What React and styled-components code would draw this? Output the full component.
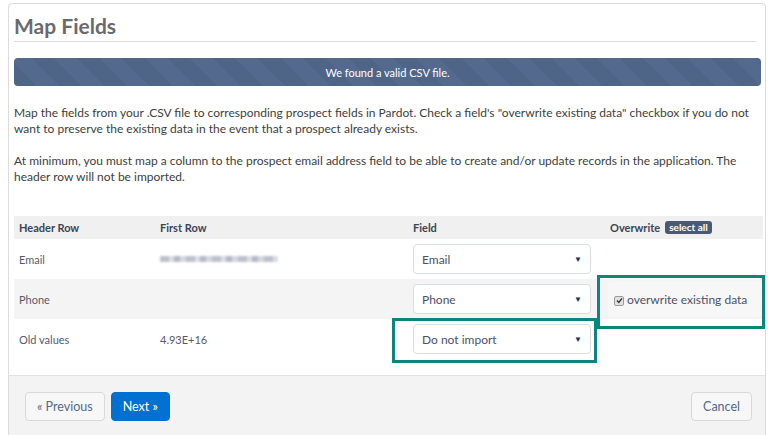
import styled, { createGlobalStyle } from 'styled-components';

const GlobalStyle = createGlobalStyle`
  html, body {
    height: 100%;
  }
  body {
    margin: 0;
    background: #ffffff;
    font-family: Lato, "Open Sans", "Liberation Sans", sans-serif;
    overflow: hidden;
  }
`;

const rows = [
  { header: 'Email', first: null, field: 'Email', overwrite: false, shade: false },
  { header: 'Phone', first: '', field: 'Phone', overwrite: true, shade: true },
  { header: 'Old values', first: '4.93E+16', field: 'Do not import', overwrite: false, shade: false },
];

function App() {
  return (
    <>
      <GlobalStyle />
      <Page>
        <Panel>
          <Content>
            <Title>Map Fields</Title>
            <Banner>We found a valid CSV file.</Banner>
            <Intro>
              Map the fields from your .CSV file to corresponding prospect fields in Pardot. Check a field's
              "overwrite existing data" checkbox if you do not want to preserve the existing data in the event
              that a prospect already exists.
            </Intro>
            <Intro>
              At minimum, you must map a column to the prospect email address field to be able to create and/or
              update records in the application. The header row will not be imported.
            </Intro>

            <TableWrap>
              <Table>
                <HeadCell>Header Row</HeadCell>
                <HeadCell>First Row</HeadCell>
                <HeadCell>Field</HeadCell>
                <HeadCell>
                  Overwrite <Badge>select all</Badge>
                </HeadCell>
                {rows.map((row) => (
                  <Row key={row.header} $shade={row.shade}>
                    <Cell>{row.header}</Cell>
                    <Cell>{row.first === null ? <Blurred /> : row.first}</Cell>
                    <Cell>
                      <Select>
                        <span>{row.field}</span>
                        <Caret>▼</Caret>
                      </Select>
                    </Cell>
                    <Cell>
                      {row.overwrite && (
                        <OverwriteBox>
                          <CheckBox>
                            <svg width="7" height="7" viewBox="0 0 7 7">
                              <path d="M1 3.6 L2.8 5.4 L6 1.4" fill="none" stroke="#333" strokeWidth="1.4" />
                            </svg>
                          </CheckBox>
                          overwrite existing data
                        </OverwriteBox>
                      )}
                    </Cell>
                  </Row>
                ))}
              </Table>
              <Highlight style={{ left: 583, top: 59, width: 162, height: 48 }} />
              <Highlight style={{ left: 378, top: 102, width: 199, height: 39 }} />
            </TableWrap>
          </Content>

          <Footer>
            <Button>« Previous</Button>
            <Button $primary>Next »</Button>
            <Spacer />
            <Button>Cancel</Button>
          </Footer>
        </Panel>
      </Page>
    </>
  );
}

const Page = styled.div`
  height: 100vh;
  overflow: hidden;
  padding: 3px 2px 0 8px;
  box-sizing: border-box;
`;

const Panel = styled.div`
  height: 460px;
  border: 1px solid #dcdcdc;
  border-radius: 4px;
  background: #ffffff;
  display: flex;
  flex-direction: column;
`;

const Content = styled.div`
  padding: 0 4px 0 5px;
`;

const Title = styled.h1`
  margin: 0 5px 0 0;
  padding: 10px 0 4px;
  font-size: 21px;
  font-weight: 700;
  line-height: 23px;
  color: #6a6a6e;
  border-bottom: 1px solid #dedede;
`;

const Banner = styled.div`
  margin-top: 16px;
  height: 28px;
  border-radius: 4px;
  background-color: #536a8e;
  background-image: repeating-linear-gradient(
    45deg,
    rgba(0, 0, 0, 0.05) 0 16px,
    rgba(255, 255, 255, 0) 16px 32px
  );
  color: #ffffff;
  font-size: 11px;
  display: flex;
  align-items: center;
  justify-content: center;
`;

const Intro = styled.p`
  margin: 19px 0 0;
  font-size: 12px;
  line-height: 16px;
  color: #3e3e3c;
  padding-right: 6px;

  & + & {
    margin-top: 16px;
  }
`;

const TableWrap = styled.div`
  position: relative;
  margin-top: 31px;
  width: 748px;
`;

const Table = styled.div`
  display: grid;
  grid-template-columns: 141px 253px 197px 1fr;
`;

const HeadCell = styled.div`
  height: 23px;
  background: #f0f0f0;
  padding-left: 5px;
  font-size: 11px;
  font-weight: 700;
  color: #3b4456;
  display: flex;
  align-items: center;
  gap: 5px;
`;

const Badge = styled.span`
  background: #4a5a75;
  color: #ffffff;
  font-size: 10px;
  font-weight: 700;
  border-radius: 3px;
  padding: 1px 4px;
  line-height: 11px;
`;

const Row = styled.div`
  display: contents;

  & > div {
    background: ${(props) => (props.$shade ? '#f4f4f4' : '#ffffff')};
  }
`;

const Cell = styled.div`
  height: 40px;
  padding-left: 5px;
  font-size: 11px;
  color: #585a6c;
  display: flex;
  align-items: center;
`;

const Blurred = styled.div`
  width: 118px;
  height: 6px;
  background: repeating-linear-gradient(
    90deg,
    #b3b6c4 0 9px,
    #d6d8df 9px 14px,
    #a9adbb 14px 20px,
    #cfd1d9 20px 26px
  );
  filter: blur(1.2px);
  opacity: 0.85;
`;

const Select = styled.div`
  width: 178px;
  height: 30px;
  box-sizing: border-box;
  border: 1px solid #d8dde6;
  border-radius: 4px;
  background: #ffffff;
  padding: 0 8px 0 8px;
  font-size: 12px;
  color: #4d5066;
  display: flex;
  align-items: center;
  justify-content: space-between;
`;

const Caret = styled.span`
  font-size: 8px;
  color: #16325c;
`;

const OverwriteBox = styled.div`
  margin-left: -2px;
  width: 155px;
  height: 35px;
  box-sizing: border-box;
  border-radius: 4px;
  background: #f7f7f7;
  padding-left: 6px;
  font-size: 12px;
  color: #4d5066;
  display: flex;
  align-items: center;
  gap: 3px;
`;

const CheckBox = styled.span`
  width: 8px;
  height: 8px;
  border: 1px solid #9a9a9a;
  border-radius: 2px;
  background: #e2e2e2;
  display: inline-flex;
  align-items: center;
  justify-content: center;
  margin-top: 3px;
`;

const Highlight = styled.div`
  position: absolute;
  border: 3px solid #0e857c;
  pointer-events: none;
`;

const Footer = styled.div`
  margin-top: 16px;
  flex: 1;
  background: #f3f3f3;
  border-top: 1px solid #e2e2e2;
  border-radius: 0 0 4px 4px;
  padding: 16px 13px 0 16px;
  display: flex;
  align-items: flex-start;
  gap: 6px;
`;

const Spacer = styled.div`
  flex: 1;
`;

const Button = styled.button`
  height: 29px;
  padding: 0 11px;
  border-radius: 4px;
  font-family: inherit;
  font-size: 12.5px;
  border: 1px solid ${(props) => (props.$primary ? '#0070d2' : '#d8d8d8')};
  background: ${(props) => (props.$primary ? '#0070d2' : '#f7f7f7')};
  color: ${(props) => (props.$primary ? '#ffffff' : '#54698d')};
`;

export default App;
